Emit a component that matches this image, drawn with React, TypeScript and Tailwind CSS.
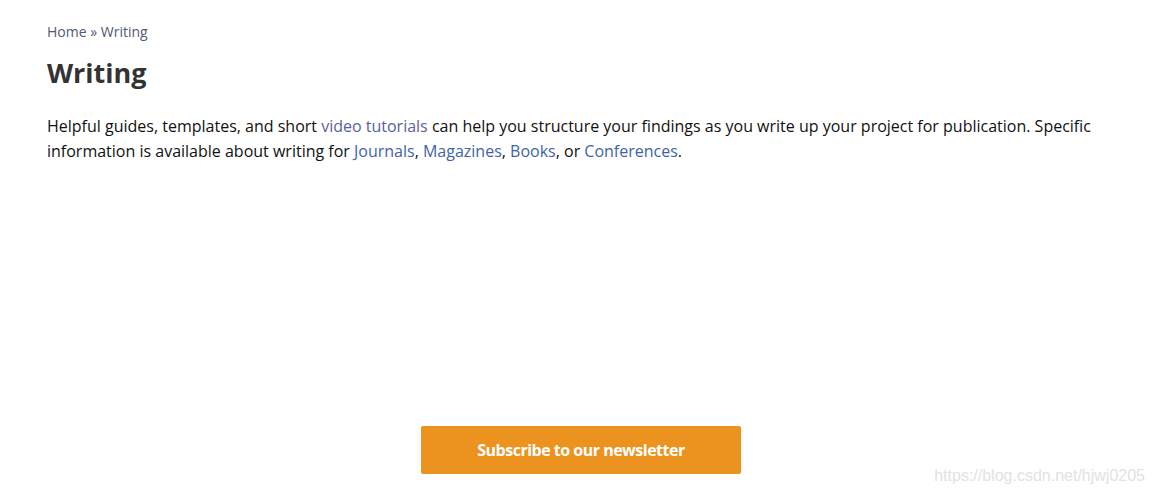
import React from "react";

export default function App() {
  return (
    <div className="relative h-[494px] w-[1152px] overflow-hidden bg-white" style={{ fontFamily: '"Open Sans", sans-serif' }}>
      <div className="px-[47px] pt-[22px]">
        <nav className="text-[14px] leading-[20px] text-[#4f5a78]">
          <a className="text-[#4f5a78]">Home</a> » Writing
        </nav>
        <h1 className="mt-[15px] text-[27px] font-bold leading-[32px] text-[#333333]">Writing</h1>
        <p className="mt-[25px] text-[16px] leading-[25px] text-[#111111]">
          Helpful guides, templates, and short <a className="text-[#5a5f9e]">video tutorials</a> can help you structure your findings as you write up your project for publication. Specific information is available about writing for <a className="text-[#3f63a8]">Journals</a>, <a className="text-[#3f63a8]">Magazines</a>, <a className="text-[#3f63a8]">Books</a>, or <a className="text-[#3f63a8]">Conferences</a>.
        </p>
      </div>
      <div className="mt-[262px] flex justify-center pl-[10px]">
        <button className="flex h-[48px] w-[320px] items-center justify-center rounded-[2px] bg-[#ec931f] text-[16px] font-bold tracking-[-0.5px] text-white">
          Subscribe to our newsletter
        </button>
      </div>
      <div className="absolute bottom-[6px] right-[7px] text-[16px] text-[#e2e2e2]" style={{ fontFamily: '"Liberation Sans", Arial, sans-serif' }}>
        https://blog.csdn.net/hjwj0205
      </div>
    </div>
  );
}
